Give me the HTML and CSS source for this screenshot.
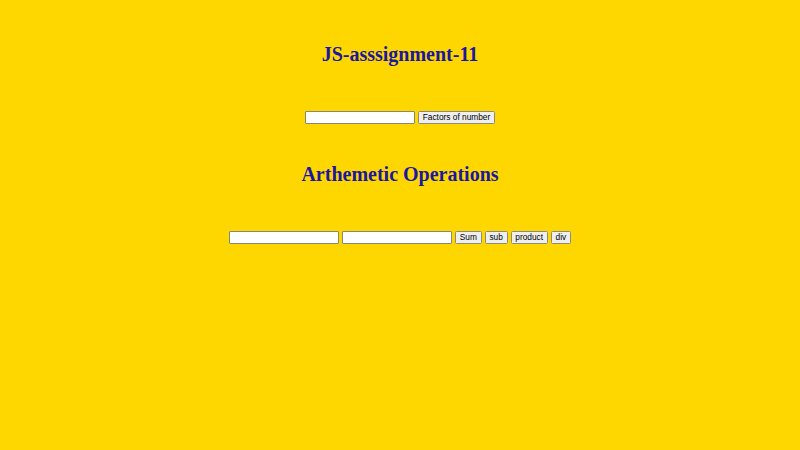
FILE: index.html
```html
<!DOCTYPE html>
<html lang="en">
<head>
<meta charset="utf-8">
<title>JS-asssignment-11</title>
<link rel="stylesheet" href="styles.css">
</head>
<body>
  <h1 class="title">JS-asssignment-11</h1>
  <div class="row row-one">
    <input class="field" type="text">
    <button class="btn">Factors of number</button>
  </div>
  <h1 class="title title-two">Arthemetic Operations</h1>
  <div class="row row-two">
    <input class="field" type="text">
    <input class="field" type="text">
    <button class="btn">Sum</button>
    <button class="btn">sub</button>
    <button class="btn">product</button>
    <button class="btn">div</button>
  </div>
</body>
</html>
```

FILE: styles.css
```css
html, body {
  margin: 0;
  padding: 0;
  background: #ffd700;
}
body {
  padding-top: 43px;
  font-family: "Liberation Serif", "Times New Roman", serif;
}
.title {
  margin: 0;
  text-align: center;
  font-size: 20px;
  line-height: 23px;
  height: 23px;
  font-weight: bold;
  color: #1a17a0;
}
.title-two {
  margin-top: 38.5px;
}
.row {
  display: flex;
  justify-content: center;
  align-items: center;
  gap: 3px;
  height: 13px;
}
.row-one {
  margin-top: 45px;
}
.row-two {
  margin-top: 45.5px;
}
.field {
  box-sizing: border-box;
  width: 110px;
  height: 13px;
  margin: 0;
  padding: 0 1px;
  border: 1px solid #8a8676;
  border-radius: 1px;
  background: #ffffff;
  font-family: "Liberation Sans", Arial, sans-serif;
  font-size: 8.33px;
}
.btn {
  box-sizing: border-box;
  height: 13px;
  margin: 0;
  padding: 0 3.75px;
  border: 1px solid #8e8a78;
  border-radius: 1.5px;
  background: #efefef;
  color: #000000;
  font-family: "Liberation Sans", Arial, sans-serif;
  font-size: 8.33px;
  line-height: 11px;
}
```
